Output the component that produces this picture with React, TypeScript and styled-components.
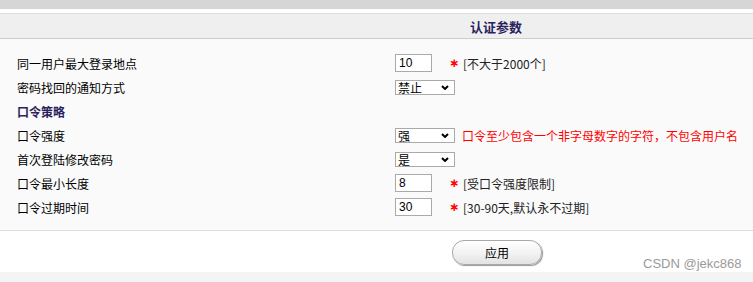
import styled, { createGlobalStyle } from "styled-components";

const GlobalStyle = createGlobalStyle`
  html, body {
    margin: 0;
    padding: 0;
    background: #ffffff;
    overflow: hidden;
  }
  body {
    font-family: "Liberation Sans", "Noto Sans CJK SC", sans-serif;
    font-size: 12px;
    color: #000;
  }
`;

const Page = styled.div`
  position: relative;
  width: 753px;
  height: 282px;
  display: flex;
  flex-direction: column;
`;

const TopStrip = styled.div`
  height: 9px;
  background: #d6d6d6;
  margin-bottom: 4px;
`;

const Header = styled.div`
  height: 24px;
  border-top: 1px solid #d8dee5;
  border-bottom: 1px solid #cccccc;
  background: #efefef;
  display: flex;
  align-items: center;
  padding-left: 470px;
  font-family: "Noto Sans CJK SC", sans-serif;
  font-weight: bold;
  font-size: 13px;
  color: #2b1f5e;
`;

const Body = styled.div`
  background: #fafafa;
  border-bottom: 1px solid #d6dee6;
  padding: 12px 0 11px 17px;
  display: grid;
  grid-template-columns: 378px 1fr;
  grid-auto-rows: 24px;
`;

const Label = styled.div<{ $section?: boolean }>`
  display: flex;
  align-items: center;
  font-family: "Noto Sans CJK SC", sans-serif;
  font-size: 12px;
  font-weight: ${(p) => (p.$section ? "bold" : "normal")};
  color: ${(p) => (p.$section ? "#2b1f5e" : "#000")};
  grid-column: ${(p) => (p.$section ? "1 / span 2" : "auto")};
`;

const Value = styled.div`
  display: flex;
  align-items: center;
`;

const TextInput = styled.input`
  box-sizing: border-box;
  width: 37px;
  height: 18px;
  border: 1px solid #aaaaaa;
  background: #fff;
  padding: 0 3px;
  font-family: "Liberation Sans", sans-serif;
  font-size: 12px;
  color: #000;
  outline: none;
`;

const SelectWrap = styled.div`
  position: relative;
  width: 60px;
  height: 15px;
`;

const Select = styled.select`
  appearance: none;
  box-sizing: border-box;
  width: 60px;
  height: 15px;
  border: 1px solid #aaaaaa;
  border-radius: 0;
  background: #fff;
  padding: 0 0 0 2px;
  font-family: "Noto Sans CJK SC", sans-serif;
  font-size: 12px;
  line-height: 13px;
  color: #000;
  outline: none;
`;

const Chevron = styled.svg`
  position: absolute;
  right: 6px;
  top: 5px;
  pointer-events: none;
`;

const Star = styled.span`
  color: #ff0000;
  margin-left: 17px;
  width: 14px;
  font-family: "DejaVu Sans", sans-serif;
  font-weight: bold;
  font-size: 12px;
`;

const Hint = styled.span`
  font-family: "Noto Sans CJK SC", sans-serif;
  font-size: 12px;
  color: #222;
`;

const Warn = styled.span`
  margin-left: 7px;
  font-family: "Noto Sans CJK SC", sans-serif;
  font-size: 12px;
  color: #ff0000;
`;

const Footer = styled.div`
  height: 41px;
  background: #ffffff;
  display: flex;
  align-items: center;
  padding-left: 452px;
`;

const ApplyButton = styled.button`
  box-sizing: border-box;
  width: 90px;
  height: 25px;
  border: 1px solid #a8a8a8;
  border-radius: 12px;
  background: linear-gradient(#ffffff, #f2f2f2 55%, #e2e2e2);
  box-shadow: 1px 1px 1px #9a9a9a;
  font-family: "Noto Sans CJK SC", sans-serif;
  font-size: 12px;
  color: #000;
  padding: 0;
  margin-top: 1px;
`;

const BottomStrip = styled.div`
  flex: 1;
  background: #f4f4f4;
`;

const Watermark = styled.div`
  position: absolute;
  left: 643px;
  top: 256px;
  font-family: "Liberation Sans", sans-serif;
  font-size: 13px;
  color: #9a9a9a;
`;

function Dropdown({ value, options }: { value: string; options: string[] }) {
  return (
    <SelectWrap>
      <Select defaultValue={value}>
        {options.map((o) => (
          <option key={o}>{o}</option>
        ))}
      </Select>
      <Chevron width="8" height="5" viewBox="0 0 8 5">
        <path d="M1 1 L4 4 L7 1" fill="none" stroke="#000" strokeWidth="2" />
      </Chevron>
    </SelectWrap>
  );
}

function App() {
  return (
    <Page>
      <GlobalStyle />
      <TopStrip />
      <Header>认证参数</Header>
      <Body>
        <Label>同一用户最大登录地点</Label>
        <Value>
          <TextInput defaultValue="10" />
          <Star>∗</Star>
          <Hint>[不大于2000个]</Hint>
        </Value>
        <Label>密码找回的通知方式</Label>
        <Value>
          <Dropdown value="禁止" options={["禁止", "邮件", "短信"]} />
        </Value>
        <Label $section>口令策略</Label>
        <Label>口令强度</Label>
        <Value>
          <Dropdown value="强" options={["强", "中", "弱"]} />
          <Warn>口令至少包含一个非字母数字的字符，不包含用户名</Warn>
        </Value>
        <Label>首次登陆修改密码</Label>
        <Value>
          <Dropdown value="是" options={["是", "否"]} />
        </Value>
        <Label>口令最小长度</Label>
        <Value>
          <TextInput defaultValue="8" />
          <Star>∗</Star>
          <Hint>[受口令强度限制]</Hint>
        </Value>
        <Label>口令过期时间</Label>
        <Value>
          <TextInput defaultValue="30" />
          <Star>∗</Star>
          <Hint>[30-90天,默认永不过期]</Hint>
        </Value>
      </Body>
      <Footer>
        <ApplyButton>应用</ApplyButton>
      </Footer>
      <BottomStrip />
      <Watermark>CSDN @jekc868</Watermark>
    </Page>
  );
}

export default App;
